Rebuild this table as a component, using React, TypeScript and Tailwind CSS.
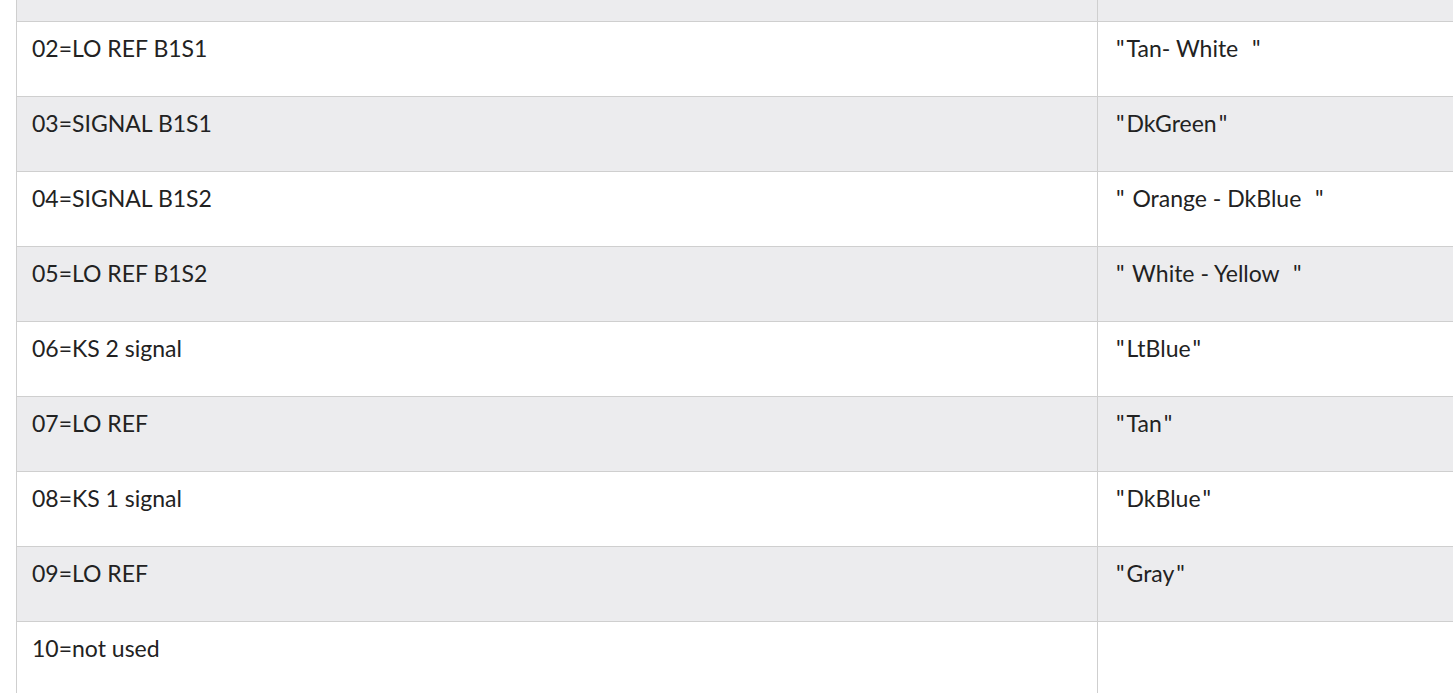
import React from 'react';

const rows: [string, string][] = [
  ['02=LO REF B1S1', '"Tan- White  "'],
  ['03=SIGNAL B1S1', '"DkGreen"'],
  ['04=SIGNAL B1S2', '" Orange - DkBlue  "'],
  ['05=LO REF B1S2', '" White - Yellow  "'],
  ['06=KS 2 signal', '"LtBlue"'],
  ['07=LO REF', '"Tan"'],
  ['08=KS 1 signal', '"DkBlue"'],
  ['09=LO REF', '"Gray"'],
  ['10=not used', ''],
];

// quotes get a little air, like the source font
const Wire = ({ text }: { text: string }) => (
  <>
    {text.split('"').map((part, i, arr) => (
      <React.Fragment key={i}>
        {part}
        {i < arr.length - 1 && <span className="mx-[2px]">"</span>}
      </React.Fragment>
    ))}
  </>
);

const App: React.FC = () => {
  return (
    <div className="h-[693px] overflow-hidden bg-white pl-4 font-['Lato',sans-serif] text-[23px] text-[#222]">
      <table className="w-[1480px] table-fixed border-collapse">
        <colgroup>
          <col className="w-[1081px]" />
          <col />
        </colgroup>
        <tbody>
          <tr className="h-[21px] bg-[#ececee]">
            <td className="border-x border-[#cfcfcf]" />
            <td className="border-x border-[#cfcfcf]" />
          </tr>
          {rows.map(([pin, wire], i) => (
            <tr key={pin} className={i % 2 === 0 ? 'h-[75px] bg-white' : 'h-[75px] bg-[#ececee]'}>
              <td className="border border-[#cfcfcf] px-[15px] pb-[34px] pt-[12px] align-top leading-[28px] whitespace-pre">
                {pin}
              </td>
              <td className="border border-[#cfcfcf] pl-[16px] pr-[18px] pb-[34px] pt-[12px] align-top leading-[28px] whitespace-pre">
                <Wire text={wire} />
              </td>
            </tr>
          ))}
        </tbody>
      </table>
    </div>
  );
};

export default App;
